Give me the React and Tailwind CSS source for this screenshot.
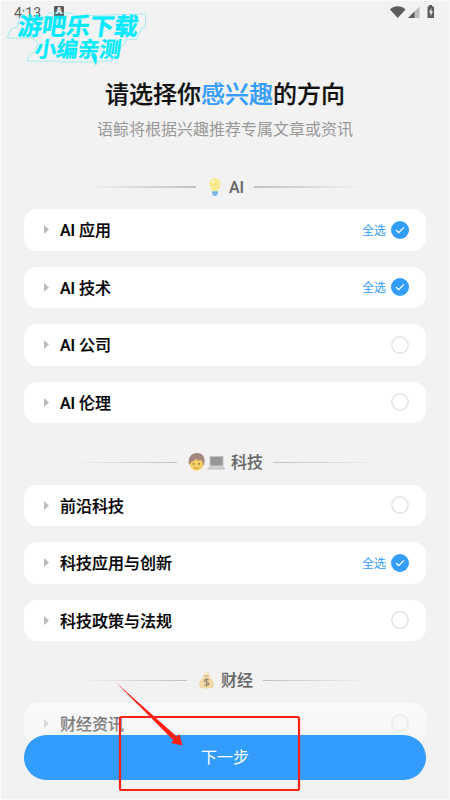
import React from "react";

const groups = [
  {
    icon: <Bulb />,
    title: "AI",
    items: [
      { name: "AI 应用", on: true },
      { name: "AI 技术", on: true },
      { name: "AI 公司" },
      { name: "AI 伦理" },
    ],
  },
  {
    icon: <Coder />,
    title: "科技",
    items: [{ name: "前沿科技" }, { name: "科技应用与创新", on: true }, { name: "科技政策与法规" }],
  },
  { icon: <MoneyBag />, title: "财经", items: [{ name: "财经资讯" }] },
];

function Bulb() {
  return (
    <svg width="16" height="20" viewBox="0 0 16 20">
      <path d="M8 1C4.600 1 2.500 3.600 2.500 7c0 2.800 1.700 4.300 2.500 7h6c.8-2.700 2.500-4.200 2.500-7 0-3.400-2.100-6-5.500-6z" fill="#f9ea90" />
      <path d="M5.500 6.800c.8 1 1.700 1 2.500.2.800.8 1.700.8 2.500-.2" fill="none" stroke="#efd873" strokeWidth=".8" />
      <ellipse cx="6" cy="4.500" rx="1.800" ry="1.500" fill="#fdf5bd" />
      <path d="M5.200 14h5.600v3c0 1-1.200 2-2.800 2s-2.800-1-2.800-2z" fill="#8cc4f0" />
      <path d="M5.200 15.800h5.600M6.800 18.200h2.400" stroke="#5a9ad4" strokeWidth=".8" />
    </svg>
  );
}

function Coder() {
  return (
    <svg width="37" height="20" viewBox="0 0 37 20">
      <ellipse cx="8.500" cy="11.500" rx="6.900" ry="7.200" fill="#f6cf62" />
      <path d="M1 13C-.3 6 3 1 8.800 1c6 0 9 4.500 7.400 11l-1 2c0-3-.9-4.500-2.200-6C11 9 9 8.300 7.700 6.800 6.500 9.300 3.300 9.500 2.700 11z" fill="#a3877c" />
      <circle cx="5.500" cy="11.800" r=".9" fill="#806b55" />
      <circle cx="11.200" cy="11.800" r=".9" fill="#806b55" />
      <path d="M6 15.500c1.500 1 3.500 1 5 0" fill="none" stroke="#c8923e" strokeWidth="1" />
      <path d="M21.500 4h14v10.500h-14z" fill="#c4c4c4" />
      <path d="M22.500 5h12v8.500h-12z" fill="#979797" />
      <path d="M21.500 14.500h14l1.500 2.300H19.500z" fill="#cecece" />
      <path d="M19.500 16.600H37v.8H19.500z" fill="#b2b2b2" />
    </svg>
  );
}

function MoneyBag() {
  return (
    <svg width="17" height="20" viewBox="0 0 17 20">
      <path d="M6 5L5 2.500l2 .3L8.500 1.500l1.500 1.300 2-.3L11 5z" fill="#f6e5c0" />
      <path d="M6 6h5c2.500 2.300 4.800 5.500 4.800 8.800 0 2.800-2.300 3.800-7.300 3.800s-7.300-1-7.300-3.800C1.200 11.500 3.500 8.300 6 6z" fill="#f3d8a4" />
      <path d="M5.800 5.700h5.400" stroke="#dcb488" strokeWidth="1.200" />
      <path d="M10.800 10.200C10 9.200 6.500 9 6.500 10.800c0 1.900 4.300 1 4.300 3 0 1.800-3.500 1.700-4.500.5M8.600 8v8.500" fill="none" stroke="#978870" strokeWidth="1.200" />
    </svg>
  );
}

function Check({ on }) {
  return (
    <svg className="shrink-0" width="18" height="18" viewBox="0 0 18 18">
      {on ? (
        <>
          <circle cx="9" cy="9" r="9" fill="#339cff" />
          <path d="M5 9l2.700 2.600 5.200-5.200" fill="none" stroke="#fff" strokeWidth="1.300" />
        </>
      ) : (
        <circle cx="9" cy="9" r="8.200" fill="none" stroke="#e2e2e2" strokeWidth="1.400" />
      )}
    </svg>
  );
}

function Card({ name, on }) {
  return (
    <div className="flex h-[41.500px] items-center rounded-[13px] bg-white pr-[17px] pl-5">
      <svg className="mr-[11px]" width="5" height="9" viewBox="0 0 5 9">
        <path d="M0 0l5 4.500L0 9z" fill="#bcbcbc" />
      </svg>
      <span className="flex-1 pt-[3px] text-base leading-6 font-medium text-black [-webkit-text-stroke:0.2px_#000]">{name}</span>
      {on && <span className="mr-[5px] pt-[2px] text-xs text-[#339cff]">全选</span>}
      <Check on={on} />
    </div>
  );
}

function Group({ icon, title, items }) {
  return (
    <section>
      <div className="flex h-[61.500px] items-center justify-center gap-[10px] pt-[17px]">
        <i className="h-[1.500px] w-[110px] bg-linear-to-l from-[#c0c0c0] to-transparent" />
        <div className="flex h-5 items-center gap-[6px] pl-px">
          {icon}
          <span className="pt-[2px] text-base leading-5 font-medium text-[#666] [-webkit-text-stroke:0.1px_#666]">{title}</span>
        </div>
        <i className="h-[1.500px] w-[110px] bg-linear-to-r from-[#c0c0c0] to-transparent" />
      </div>
      <div className="flex flex-col gap-4">
        {items.map((item) => (
          <Card key={item.name} {...item} />
        ))}
      </div>
    </section>
  );
}

function Watermark() {
  return (
    <div className="absolute top-[10px] left-[6px] h-[58px] w-[142px]">
      <svg className="absolute inset-0" width="142" height="58" viewBox="0 0 142 58" fill="none">
        <path
          d="M13 6L38 6L42 2L64 2L67 5L139 3L138 16L134 18L130 28L119 29L118 33L114 35L112 43L107 45L105 50L91 50L89 54L87 51L54 51L52 50L20 50L23 43L28 41L31 32L26 27L0 27L4 18L10 16Z"
          stroke="#8debf3"
          strokeWidth=".8"
        />
        <path d="M84 44l5 0 1 4-1 6z" fill="#00eaff" />
      </svg>
      <div className="absolute top-[3px] left-[11px] -skew-x-8 text-[24px] leading-[26px] font-bold whitespace-nowrap text-[#00eaff] [-webkit-text-stroke:0.4px_#00eaff]">
        游吧乐下载
      </div>
      <div className="absolute top-[27px] left-[28px] -skew-x-8 text-[21.500px] leading-[24px] font-bold whitespace-nowrap text-[#00eaff] [-webkit-text-stroke:0.3px_#00eaff]">
        小编亲测
      </div>
    </div>
  );
}

export default function App() {
  return (
    <div className="relative h-[800px] w-[450px] overflow-hidden border border-[#fafafa] bg-[#f2f2f2] font-[Roboto,'Noto_Sans_CJK_SC',sans-serif]">
      <header className="flex h-6 items-center pr-3 pl-[13px] text-[#5d5d5d]">
        <span className="text-sm leading-6">4:13</span>
        <span className="mb-[3px] ml-[13px] flex h-[11px] w-[10px] items-center justify-center rounded-[1px] bg-[#5d5d5d] text-[9px] font-bold text-white">A</span>
        <svg className="mb-[2px] ml-auto" width="48" height="16" viewBox="0 0 48 16">
          <path d="M1 5.500C5 1.300 12.500 1.300 16.500 5.500L8.700 14z" fill="#5d5d5d" />
          <path d="M19 14L30.500 2.500V14z" fill="#bdbdbd" />
          <path d="M19 14L25.500 7.500V14z" fill="#5d5d5d" />
          <path d="M38.500 2.500H40V1h3v1.500h2V14h-6.500z" fill="#5d5d5d" />
          <path d="M42.500 4L40 8.500h1.500V12L44 7.500h-1.500z" fill="#f2f2f2" />
        </svg>
      </header>

      <div className="flex flex-col items-center pt-[51px]">
        <h1 className="text-2xl leading-[38px] font-medium text-[#111] [-webkit-text-stroke:0.2px]">
          请选择你<span className="text-[#339cff]">感兴趣</span>的方向
        </h1>
        <p className="mt-[4px] text-base leading-6 text-[#999]">语鲸将根据兴趣推荐专属文章或资讯</p>
      </div>

      <main className="mt-[5.500px] px-[23px]">
        {groups.map((g) => (
          <Group key={g.title} {...g} />
        ))}
      </main>

      <div className="absolute inset-x-0 bottom-0 flex h-[100px] flex-col justify-end bg-linear-to-b from-[#f2f2f2]/35 via-[#f2f2f2]/60 via-35% to-[#f2f2f2] to-75% px-[23px] pb-[19px]">
        <button className="h-[45px] rounded-full bg-[#339cff] text-base text-white">下一步</button>
      </div>

      <Watermark />

      <svg className="absolute -top-px -left-px" width="450" height="800" viewBox="0 0 450 800">
        <rect x="120" y="717" width="179" height="73" rx="1.500" fill="none" stroke="#ff2015" strokeWidth="2.200" />
        <path d="M116 682.500L176.700 736.500L179.500 734L182.500 745.500L171 743L173.500 740.500Z" fill="#ff2015" />
      </svg>
    </div>
  );
}
